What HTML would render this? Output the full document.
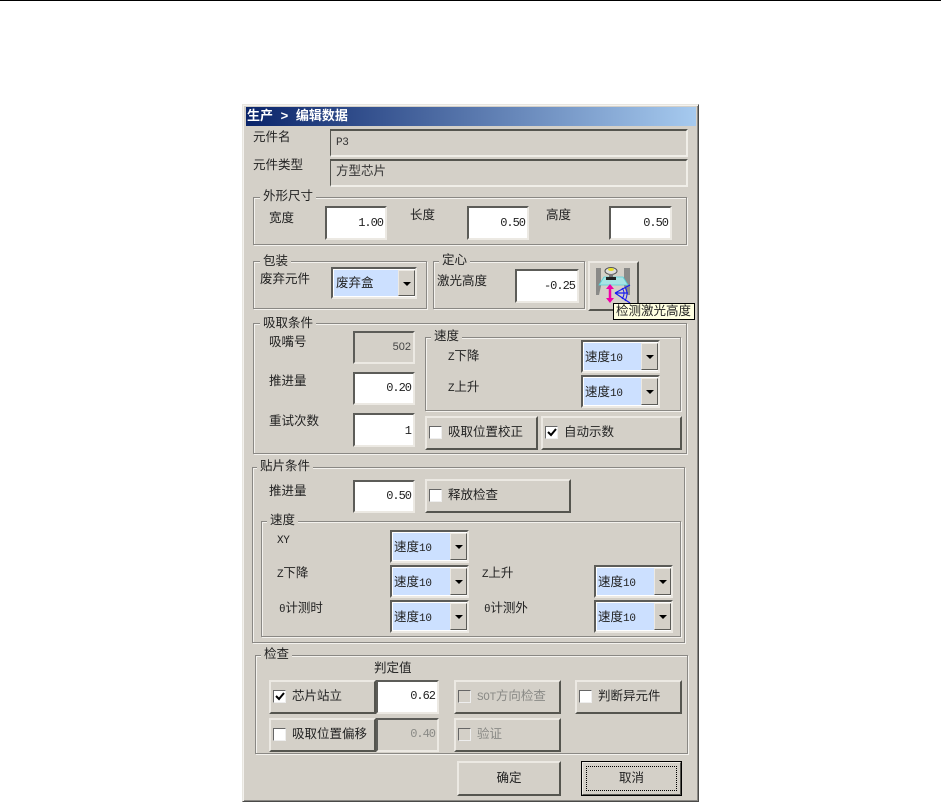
<!DOCTYPE html>
<html lang="zh"><head><meta charset="utf-8"><title>生产 &gt; 编辑数据</title>
<style>
html,body{margin:0;padding:0;background:#fff}
body{width:941px;height:802px;position:relative;overflow:hidden;font:12.5px/14px "Liberation Sans","WenQuanYi Zen Hei","Noto Sans CJK SC",sans-serif;color:#222}
div,span{box-sizing:border-box}
i{font:normal 11px/14px "Liberation Mono",monospace;letter-spacing:-.3px}
.a{position:absolute}
.l{position:absolute;white-space:nowrap;line-height:14px}
.g{position:absolute;border:1px solid #8a8884;box-shadow:1px 1px 0 #f4f2ee,inset 1px 1px 0 #f4f2ee}
.c{position:absolute;background:#d4d0c8;padding:0 3px;line-height:14px;white-space:nowrap}
.f{position:absolute;background:#fff;border:2px solid;border-color:#5c5c58 #ece9e3 #ece9e3 #5c5c58;font:12px/14px "Liberation Mono",monospace;letter-spacing:-1px;text-align:right;padding:7px 2px 0 0;color:#222}
.f.d{background:#d4d0c8;color:#8a8a86}
.ro{position:absolute;border:2px solid;border-color:#55554f #f0eee8 #f0eee8 #55554f;border-left-width:1px;padding:3px 5px;line-height:14px;color:#333}
.b{position:absolute;background:#d4d0c8;border:2px solid;border-color:#ece9e3 #55554f #55554f #ece9e3;line-height:14px;color:#222}
.k{position:absolute;left:2px;top:8px;width:13px;height:13px;background:#fff;border:1px solid;border-color:#666 #eee #eee #666}
.k.d{background:#d4d0c8}
.k svg{position:absolute;left:1px;top:1px}
.t{position:absolute;left:21px;top:7px;white-space:nowrap}
.x{position:absolute;border:2px solid;border-color:#5c5c58 #ece9e3 #ece9e3 #5c5c58;background:#cce0ff;box-shadow:inset 0 0 0 1px #fff}
.x span.v{position:absolute;left:2px;top:8px;white-space:nowrap;color:#222}
.x .ar{position:absolute;right:0;top:1px;bottom:1px;width:17px;background:#d4d0c8;border:1px solid;border-color:#ece9e3 #5c5c58 #5c5c58 #ece9e3}
.x .ar:after{content:"";position:absolute;left:4px;top:11px;border:4px solid transparent;border-top:4px solid #000;border-bottom:0}
</style></head><body>
<div class="a" style="left:0;top:0;width:941px;height:1px;background:#000"></div>

<!-- window -->
<div class="a" style="left:242px;top:104px;width:457px;height:698px;background:#d4d0c8;border:1px solid;border-color:#e8e6e0 #4a4a48 #4a4a48 #e8e6e0;box-shadow:inset 1px 1px 0 #f4f2ee,inset -1px -1px 0 #8a8884"></div>
<div class="a" style="left:246px;top:107px;width:450px;height:19px;background:linear-gradient(90deg,#0a246a,#a6caef)"></div>
<div class="l" style="left:247px;top:109px;color:#fff;font-weight:bold;font-size:13px;word-spacing:4px">生产 &gt; 编辑数据</div>

<div class="l" style="left:253px;top:130px">元件名</div>
<div class="l" style="left:253px;top:158px">元件类型</div>
<div class="ro" style="left:330px;top:129px;width:358px;height:28px"><i>P3</i></div>
<div class="ro" style="left:330px;top:159px;width:358px;height:28px">方型芯片</div>

<!-- 外形尺寸 -->
<div class="g" style="left:253px;top:197px;width:434px;height:48px"></div>
<div class="c" style="left:260px;top:189px">外形尺寸</div>
<div class="l" style="left:269px;top:211px">宽度</div>
<div class="l" style="left:410px;top:208px">长度</div>
<div class="l" style="left:546px;top:208px">高度</div>
<div class="f" style="left:325px;top:206px;width:62px;height:34px;padding-top:8px">1.00</div>
<div class="f" style="left:467px;top:206px;width:62px;height:34px;padding-top:8px">0.50</div>
<div class="f" style="left:609px;top:206px;width:63px;height:34px;padding-top:8px">0.50</div>

<!-- 包装 -->
<div class="g" style="left:253px;top:261px;width:174px;height:48px"></div>
<div class="c" style="left:260px;top:254px">包装</div>
<div class="l" style="left:260px;top:272px">废弃元件</div>
<div class="x" style="left:331px;top:267px;width:86px;height:32px"><span class="v" style="left:3px;top:7px">废弃盒</span><span class="ar"></span></div>

<!-- 定心 -->
<div class="g" style="left:433px;top:261px;width:152px;height:48px"></div>
<div class="c" style="left:439px;top:253px">定心</div>
<div class="l" style="left:437px;top:274px">激光高度</div>
<div class="f" style="left:515px;top:269px;width:64px;height:34px;padding-top:8px">-0.25</div>

<!-- icon button -->
<div class="b" style="left:588px;top:261px;width:51px;height:50px"></div>
<svg class="a" style="left:595px;top:266px" width="40" height="40" viewBox="0 0 40 40">
<path d="M1 2H6V20L4 29H1Z" fill="#8a8a88"/><path d="M29 2H35V29H32L29 20Z" fill="#8a8a88"/>
<path d="M4 19L9 11H28L33 19Z" fill="#a8e4e4" stroke="#52d0d8" stroke-width=".8"/>
<ellipse cx="16" cy="5" rx="6" ry="3.5" fill="#ddd" stroke="#555"/><ellipse cx="16" cy="3.5" rx="3" ry="1.5" fill="#e8e020"/>
<rect x="14" y="8" width="4" height="3" fill="#777"/><rect x="11" y="11" width="10" height="3" fill="#222"/>
<path d="M15 20V34" stroke="#f000a8" stroke-width="2.5"/><path d="M11 23l4-5 4 5zM11 32l4 5 4-5z" fill="#f000a8"/>
<path d="M20 27L35 19M20 27L35 37M20 27H33" stroke="#1a1af0" stroke-width="1.2" fill="none"/><path d="M27 22Q31 27 27 33M30 21Q34 27 30 35" stroke="#1a1af0" fill="none"/>
</svg>
<div class="a" style="left:613px;top:303px;width:82px;height:17px;background:#ffffe1;border:1px solid #000;font-size:12.5px;line-height:15px;padding-left:2px;white-space:nowrap;color:#222">检测激光高度</div>

<!-- 吸取条件 -->
<div class="g" style="left:253px;top:323px;width:434px;height:131px"></div>
<div class="c" style="left:260px;top:316px">吸取条件</div>
<div class="l" style="left:269px;top:335px">吸嘴号</div>
<div class="l" style="left:269px;top:374px">推进量</div>
<div class="l" style="left:269px;top:414px">重试次数</div>
<div class="f d" style="left:353px;top:331px;width:62px;height:33px;color:#444;font-family:'Liberation Sans';font-size:11px;letter-spacing:0">502</div>
<div class="f" style="left:353px;top:372px;width:62px;height:33px">0.20</div>
<div class="f" style="left:353px;top:413px;width:62px;height:34px;padding-top:9px">1</div>
<div class="g" style="left:425px;top:337px;width:256px;height:74px"></div>
<div class="c" style="left:431px;top:329px">速度</div>
<div class="l" style="left:448px;top:349px"><i>Z</i>下降</div>
<div class="l" style="left:448px;top:380px"><i>Z</i>上升</div>
<div class="x" style="left:581px;top:340px;width:79px;height:33px"><span class="v">速度<i>10</i></span><span class="ar"></span></div>
<div class="x" style="left:581px;top:375px;width:79px;height:33px"><span class="v">速度<i>10</i></span><span class="ar"></span></div>
<div class="b" style="left:425px;top:416px;width:113px;height:34px"><span class="k"></span><span class="t">吸取位置校正</span></div>
<div class="b" style="left:541px;top:416px;width:141px;height:34px"><span class="k"><svg width="10" height="10" viewBox="0 0 10 10"><path d="M1 4l3 3 5-6" fill="none" stroke="#000" stroke-width="2"/></svg></span><span class="t">自动示数</span></div>

<!-- 贴片条件 -->
<div class="g" style="left:252px;top:467px;width:433px;height:176px"></div>
<div class="c" style="left:257px;top:459px">贴片条件</div>
<div class="l" style="left:269px;top:484px">推进量</div>
<div class="f" style="left:353px;top:480px;width:62px;height:33px">0.50</div>
<div class="b" style="left:425px;top:479px;width:146px;height:34px"><span class="k"></span><span class="t">释放检查</span></div>
<div class="g" style="left:261px;top:521px;width:420px;height:116px"></div>
<div class="c" style="left:267px;top:513px">速度</div>
<div class="l" style="left:277px;top:532px"><i>XY</i></div>
<div class="l" style="left:277px;top:566px"><i>Z</i>下降</div>
<div class="l" style="left:279px;top:601px"><i>θ</i>计测时</div>
<div class="l" style="left:482px;top:566px"><i>Z</i>上升</div>
<div class="l" style="left:484px;top:601px"><i>θ</i>计测外</div>
<div class="x" style="left:390px;top:530px;width:79px;height:33px"><span class="v">速度<i>10</i></span><span class="ar"></span></div>
<div class="x" style="left:390px;top:565px;width:79px;height:33px"><span class="v">速度<i>10</i></span><span class="ar"></span></div>
<div class="x" style="left:390px;top:600px;width:79px;height:33px"><span class="v">速度<i>10</i></span><span class="ar"></span></div>
<div class="x" style="left:594px;top:565px;width:79px;height:33px"><span class="v">速度<i>10</i></span><span class="ar"></span></div>
<div class="x" style="left:594px;top:600px;width:79px;height:33px"><span class="v">速度<i>10</i></span><span class="ar"></span></div>

<!-- 检查 -->
<div class="g" style="left:255px;top:655px;width:433px;height:99px"></div>
<div class="c" style="left:261px;top:647px">检查</div>
<div class="l" style="left:374px;top:661px">判定值</div>
<div class="b" style="left:269px;top:680px;width:107px;height:34px"><span class="k"><svg width="10" height="10" viewBox="0 0 10 10"><path d="M1 4l3 3 5-6" fill="none" stroke="#000" stroke-width="2"/></svg></span><span class="t">芯片站立</span></div>
<div class="f" style="left:376px;top:680px;width:63px;height:34px">0.62</div>
<div class="b" style="left:269px;top:718px;width:107px;height:34px"><span class="k"></span><span class="t">吸取位置偏移</span></div>
<div class="f d" style="left:376px;top:718px;width:63px;height:34px">0.40</div>
<div class="b" style="left:454px;top:680px;width:107px;height:34px;color:#8a8a86"><span class="k d"></span><span class="t"><i>SOT</i>方向检查</span></div>
<div class="b" style="left:454px;top:718px;width:107px;height:34px;color:#8a8a86"><span class="k d"></span><span class="t">验证</span></div>
<div class="b" style="left:575px;top:680px;width:107px;height:34px"><span class="k"></span><span class="t">判断异元件</span></div>

<div class="b" style="left:457px;top:761px;width:104px;height:35px;text-align:center;padding-top:8px">确定</div>
<div class="b" style="left:581px;top:761px;width:101px;height:35px;text-align:center;padding-top:8px;outline:1px solid #000;outline-offset:-1px">
<span class="a" style="left:3px;top:3px;right:3px;bottom:3px;border:1px dotted #000"></span>取消</div>
</body></html>
